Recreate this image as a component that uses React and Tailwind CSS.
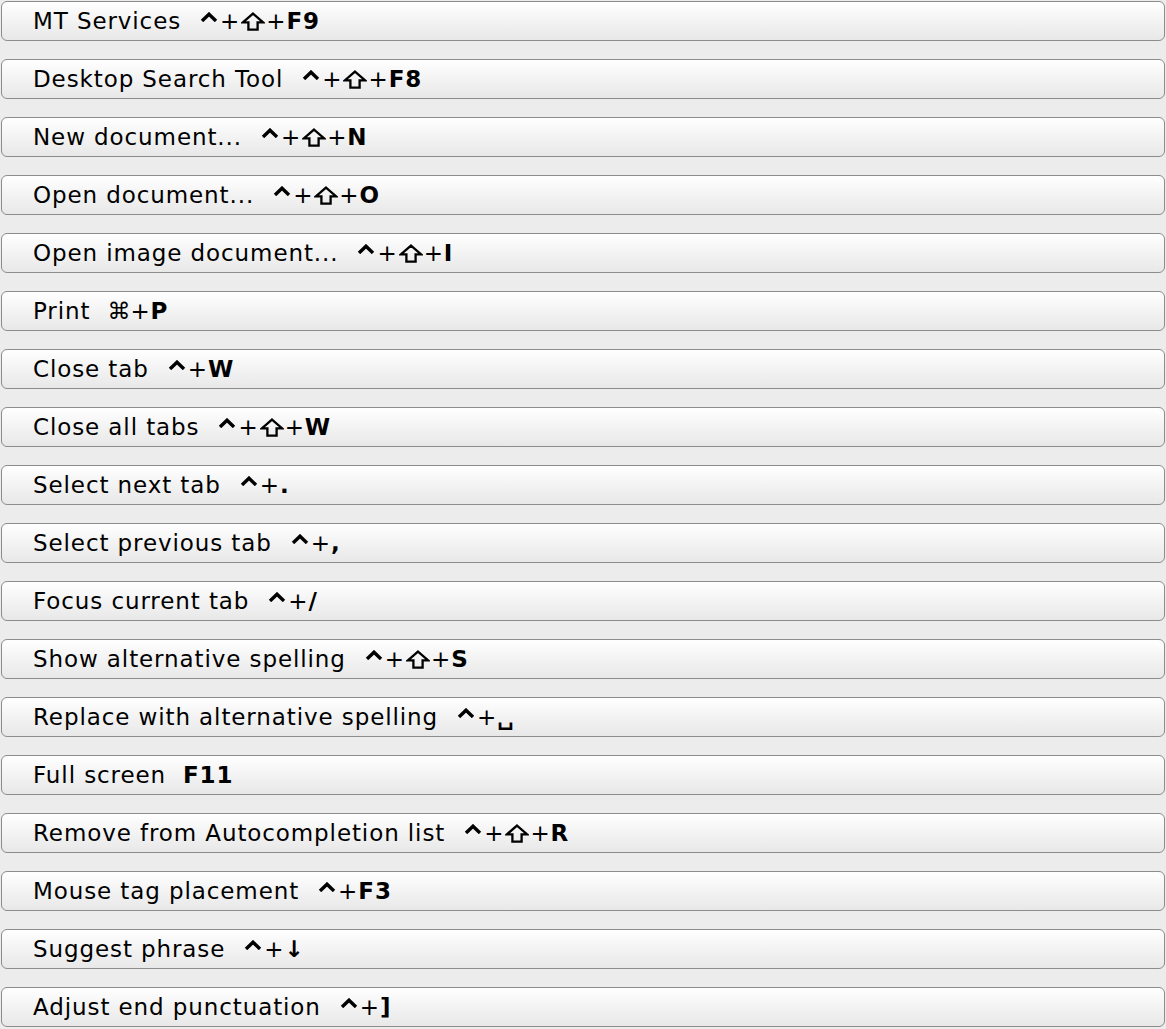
import React from 'react';

const rows = [
  ['MT Services', ['ctrl', 'shift', 'F9']],
  ['Desktop Search Tool', ['ctrl', 'shift', 'F8']],
  ['New document...', ['ctrl', 'shift', 'N']],
  ['Open document...', ['ctrl', 'shift', 'O']],
  ['Open image document...', ['ctrl', 'shift', 'I']],
  ['Print', ['cmd', 'P']],
  ['Close tab', ['ctrl', 'W']],
  ['Close all tabs', ['ctrl', 'shift', 'W']],
  ['Select next tab', ['ctrl', '.']],
  ['Select previous tab', ['ctrl', ',']],
  ['Focus current tab', ['ctrl', '/']],
  ['Show alternative spelling', ['ctrl', 'shift', 'S']],
  ['Replace with alternative spelling', ['ctrl', '␣']],
  ['Full screen', ['F11']],
  ['Remove from Autocompletion list', ['ctrl', 'shift', 'R']],
  ['Mouse tag placement', ['ctrl', 'F3']],
  ['Suggest phrase', ['ctrl', '↓']],
  ['Adjust end punctuation', ['ctrl', ']']],
];

// control key chevron
const Ctrl = () => (
  <svg width="18" height="10" viewBox="0 0 18 10" className="mb-[9px] ml-[2px] mr-[2px]">
    <polyline points="2,9 9,2.2 16,9" fill="none" stroke="#000" strokeWidth="3.4" strokeLinejoin="miter" />
  </svg>
);

// outlined shift arrow
const Shift = () => (
  <svg width="24" height="19" viewBox="0 0 24 19" className="mx-[1px]">
    <path
      d="M12 1.6 L22.2 10.4 H16.6 V17.6 H7.4 V10.4 H1.8 Z"
      fill="none"
      stroke="#000"
      strokeWidth="2.3"
      strokeLinejoin="miter"
    />
  </svg>
);

const Key = ({ k }) => {
  if (k === 'ctrl') return <Ctrl />;
  if (k === 'shift') return <Shift />;
  if (k === 'cmd') return <span className="tracking-normal">⌘</span>;
  return <span className="font-bold">{k}</span>;
};

const Shortcut = ({ keys }) => (
  <span className="ml-[17px] flex items-center">
    {keys.map((k, i) => (
      <React.Fragment key={i}>
        {i > 0 && <span>+</span>}
        <Key k={k} />
      </React.Fragment>
    ))}
  </span>
);

export default function App() {
  return (
    <div
      className="min-h-[1029px] w-[1166px] bg-[#ececec] flex flex-col gap-[18px] pt-px px-px"
      style={{ fontFamily: '"DejaVu Sans", sans-serif' }}
    >
      {rows.map(([label, keys]) => (
        <div
          key={label}
          className="h-10 shrink-0 rounded-[6px] border border-[#8c8c8c] bg-gradient-to-b from-white via-[#f3f3f3] to-[#e8e8e8] flex items-center pl-[31px] text-[23px] tracking-[0.9px] text-black leading-none"
        >
          <span>{label}</span>
          <Shortcut keys={keys} />
        </div>
      ))}
    </div>
  );
}
